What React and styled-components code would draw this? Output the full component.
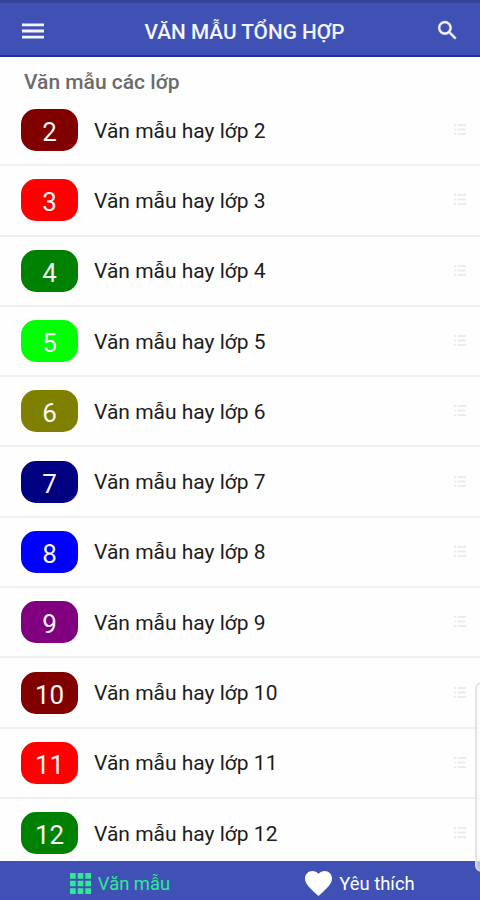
import React from "react";
import styled, { createGlobalStyle } from "styled-components";

const GlobalStyle = createGlobalStyle`
  * {
    box-sizing: border-box;
  }
  body {
    margin: 0;
    background: #fefefe;
    font-family: Roboto, "Noto Sans", sans-serif;
  }
`;

const Screen = styled.div`
  position: relative;
  display: flex;
  flex-direction: column;
  width: 480px;
  height: 900px;
  overflow: hidden;
  background: #fefefe;
`;

const TopBar = styled.header`
  display: grid;
  grid-template-columns: 66px 1fr 66px;
  align-items: center;
  flex: none;
  height: 57px;
  padding-top: 5px;
  background: #3f51b5;
  border-top: 3px solid #35439a;
  border-bottom: 2px solid #1f2fa0;
  color: #f4f6ff;
`;

const IconButton = styled.div`
  display: flex;
  justify-content: ${(props) => props.$side};
  padding: 0 20px 0 21px;
`;

const Title = styled.h1`
  margin: 0;
  padding-left: 9px;
  font-size: 20.8px;
  font-weight: 500;
  line-height: 28px;
  white-space: nowrap;
  text-align: center;
`;

const Content = styled.main`
  flex: 1;
  min-height: 0;
  overflow: hidden;
`;

const Heading = styled.h2`
  height: 39px;
  margin: 0;
  padding: 11px 0 0 24px;
  font-size: 21px;
  font-weight: 500;
  line-height: 28px;
  color: #6b6b6b;
`;

const Row = styled.div`
  display: flex;
  align-items: center;
  height: 70.3px;
  padding: 0 13px 0 21px;
  border-bottom: 2px solid #f0f0f0;
`;

const Badge = styled.div`
  width: 57px;
  height: 42px;
  margin-right: 16px;
  padding-top: 2px;
  border-radius: 15px;
  background: ${(props) => props.$color};
  color: #f5f5f5;
  font-size: 26px;
  line-height: 42px;
  text-align: center;
`;

const Label = styled.span`
  flex: 1;
  padding-top: 1px;
  font-size: 21px;
  line-height: 28px;
  color: #1c1c1c;
`;

const BottomBar = styled.nav`
  display: grid;
  grid-template-columns: 1fr 1fr;
  flex: none;
  height: 39px;
  padding-top: 5px;
  background: #3f51b5;
`;

const Tab = styled.div`
  display: flex;
  align-items: center;
  justify-content: center;
  gap: 7px;
  color: ${(props) => (props.$active ? "#2fea93" : "#ffffff")};
  font-size: 18.4px;
  line-height: 28px;

  span {
    padding-top: 2px;
  }
`;

// scroll handle overlapping the right edge of the list
const ScrollHandle = styled.div`
  position: absolute;
  top: 682px;
  right: -8px;
  width: 13px;
  height: 190px;
  border: 2px solid rgba(222, 222, 228, 0.85);
  border-radius: 7px;
  background: rgba(250, 250, 250, 0.65);
`;

const MenuIcon = () => (
  <svg width="23" height="17" viewBox="0 0 23 17" fill="currentColor">
    <path d="M1 .5h22v2.8H1zM1 6.6h22v2.8H1zM1 12.7h22v2.8H1z" />
  </svg>
);

const SearchIcon = () => (
  <svg width="27" height="27" viewBox="0 1 24 24" fill="currentColor" stroke="currentColor" strokeWidth=".4">
    <path d="M15.5 14h-.79l-.28-.27A6.47 6.47 0 0 0 16 9.5 6.5 6.5 0 1 0 9.5 16c1.61 0 3.09-.59 4.23-1.57l.27.28v.79l5 4.99L20.49 19l-4.99-5zm-6 0C7.01 14 5 11.99 5 9.5S7.01 5 9.5 5 14 7.01 14 9.5 11.99 14 9.5 14z" />
  </svg>
);

const ListIcon = () => (
  <svg width="14" height="12" viewBox="0 0 14 12" fill="#ebebeb">
    <path d="M1 0h2v2H1zM4.500 0H13v2H4.500zM1 4.500h2v2H1zM4.500 4.500H13v2H4.500zM1 9h2v2H1zM4.500 9H13v2H4.500z" />
  </svg>
);

const GridIcon = () => (
  <svg width="21" height="21" viewBox="0 0 22 22" fill="currentColor">
    <path d="M0 0h6v6H0zM8 0h6v6H8zM16 0h6v6h-6zM0 8h6v6H0zM8 8h6v6H8zM16 8h6v6h-6zM0 16h6v6H0zM8 16h6v6H8zM16 16h6v6h-6z" />
  </svg>
);

const HeartIcon = () => (
  <svg width="27" height="25" viewBox="2 3 20 18.35" preserveAspectRatio="none" fill="currentColor">
    <path d="M12 21.35l-1.45-1.32C5.4 15.36 2 12.28 2 8.5 2 5.42 4.42 3 7.5 3c1.74 0 3.41.81 4.5 2.09C13.09 3.81 14.76 3 16.5 3 19.58 3 22 5.42 22 8.5c0 3.78-3.4 6.86-8.55 11.54L12 21.35z" />
  </svg>
);

const grades = [
  { number: 2, color: "#800000" },
  { number: 3, color: "#ff0000" },
  { number: 4, color: "#008000" },
  { number: 5, color: "#00ff00" },
  { number: 6, color: "#808000" },
  { number: 7, color: "#000080" },
  { number: 8, color: "#0000ff" },
  { number: 9, color: "#800080" },
  { number: 10, color: "#800000" },
  { number: 11, color: "#ff0000" },
  { number: 12, color: "#008000" },
];

export default function App() {
  return (
    <Screen>
      <GlobalStyle />
      <TopBar>
        <IconButton $side="flex-start">
          <MenuIcon />
        </IconButton>
        <Title>VĂN MẪU TỔNG HỢP</Title>
        <IconButton $side="flex-end">
          <SearchIcon />
        </IconButton>
      </TopBar>
      <Content>
        <Heading>Văn mẫu các lớp</Heading>
        {grades.map((grade) => (
          <Row key={grade.number}>
            <Badge $color={grade.color}>{grade.number}</Badge>
            <Label>Văn mẫu hay lớp {grade.number}</Label>
            <ListIcon />
          </Row>
        ))}
      </Content>
      <BottomBar>
        <Tab $active>
          <GridIcon />
          <span>Văn mẫu</span>
        </Tab>
        <Tab>
          <HeartIcon />
          <span>Yêu thích</span>
        </Tab>
      </BottomBar>
      <ScrollHandle />
    </Screen>
  );
}
